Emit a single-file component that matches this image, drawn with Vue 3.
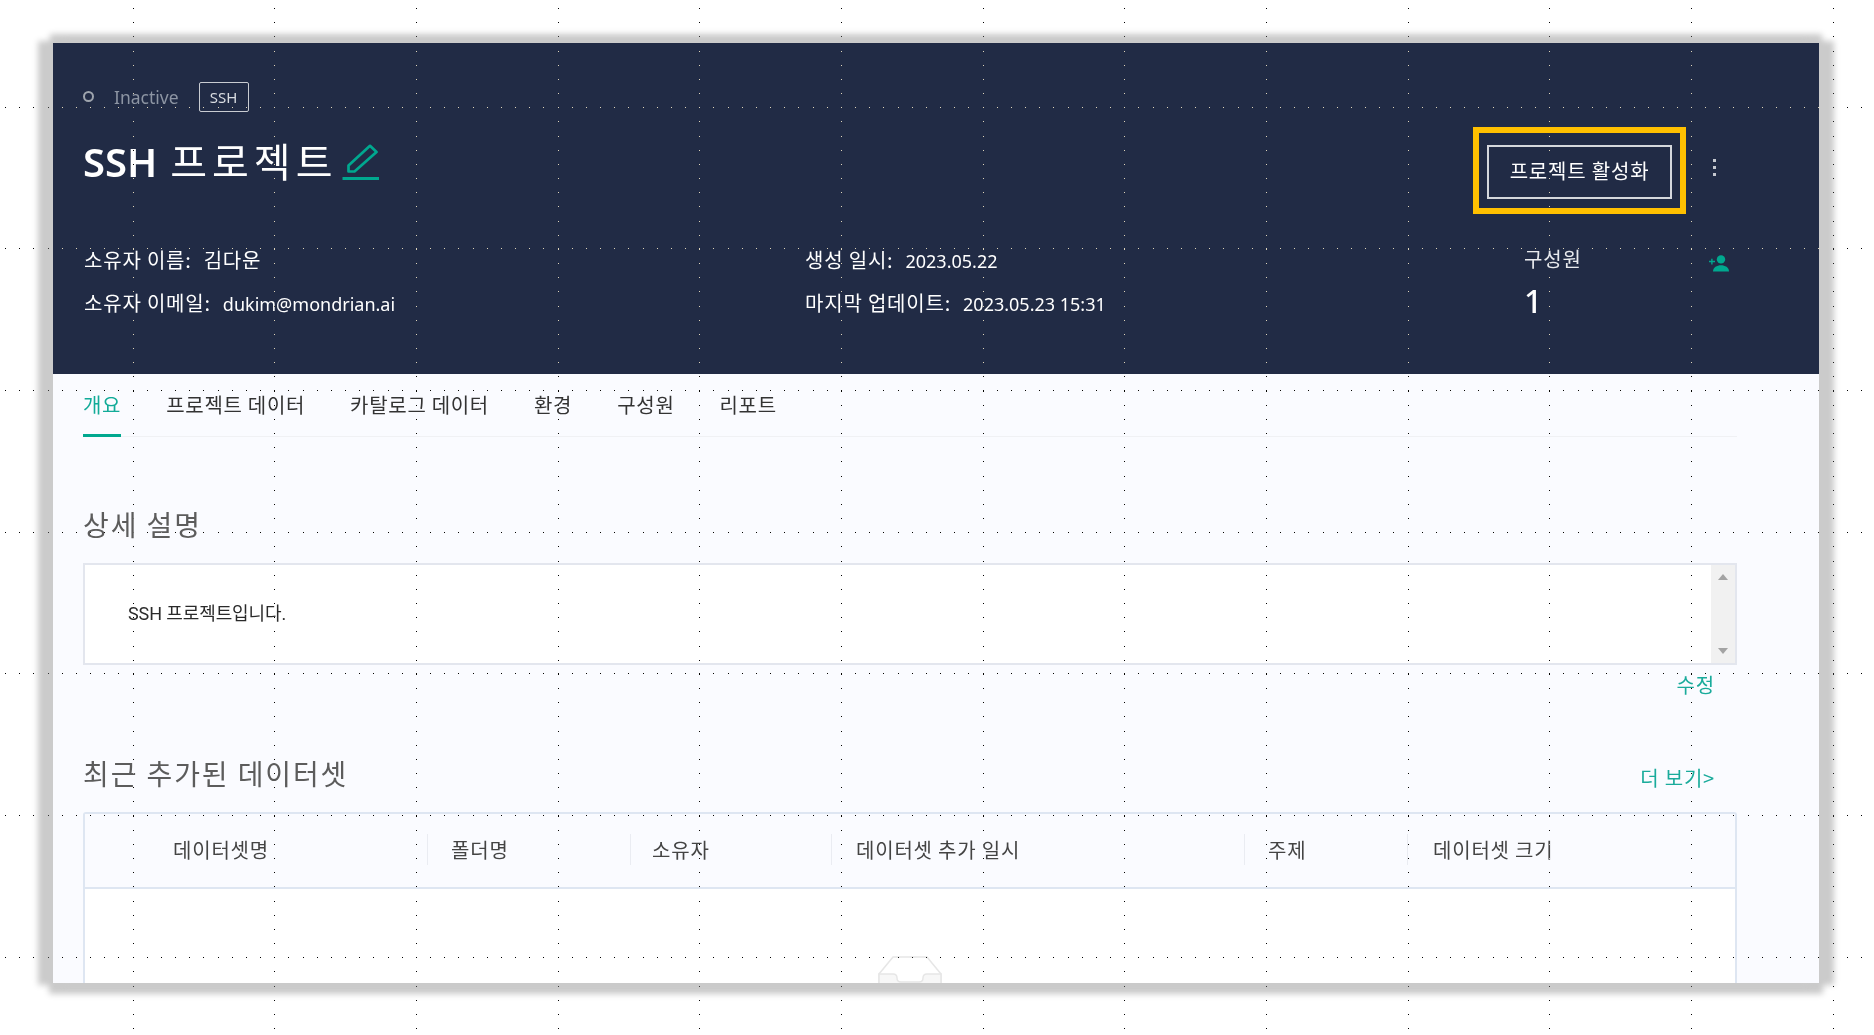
<script setup>
const tabs = ['개요', '프로젝트 데이터', '카탈로그 데이터', '환경', '구성원', '리포트']

const columns = [
  { label: '데이터셋명', width: 343, pad: 88 },
  { label: '폴더명', width: 203, pad: 23 },
  { label: '소유자', width: 201, pad: 21 },
  { label: '데이터셋 추가 일시', width: 413, pad: 24 },
  { label: '주제', width: 163, pad: 23 },
  { label: '데이터셋 크기', width: 143, pad: 25, clip: true }
]

// dotted guide lines that lie over the whole picture
const step = 141.67
const rows = Array.from({ length: 7 }, (_, i) => Math.floor(107 + i * step) + 0.5)
const cols = Array.from({ length: 13 }, (_, i) => Math.floor(133 + i * step) + 0.5)
</script>

<template>
  <div class="page">
    <div class="frame">
      <header class="hero">
        <div class="hero-main">
          <div class="status-row">
            <span class="status-dot"></span>
            <span class="status-text">Inactive</span>
            <span class="badge">SSH</span>
          </div>
          <div class="title-row">
            <h1><span class="title-latin">SSH</span> <span class="title-ko">프로젝트</span></h1>
            <svg class="pencil" viewBox="0 0 38 38" width="38" height="38" fill="none">
              <path d="M6.500 27.500V21.500L28 1.800 34.500 8 12.500 27.500Z" stroke="#00a88f" stroke-width="2.7" stroke-linejoin="round" />
              <path d="M0.500 34.500H37" stroke="#00a88f" stroke-width="3" />
            </svg>
          </div>
        </div>

        <div class="hero-action">
          <div class="highlight">
            <button type="button" class="activate">프로젝트 활성화</button>
          </div>
          <div class="more"><i></i><i></i><i></i></div>
        </div>

        <div class="meta">
          <div class="meta-col first">
            <p><span class="key">소유자 이름:</span><span class="key val">김다운</span></p>
            <p><span class="key">소유자 이메일:</span><span class="val">dukim@mondrian.ai</span></p>
          </div>
          <div class="meta-col second">
            <p><span class="key">생성 일시:</span><span class="val">2023.05.22</span></p>
            <p><span class="key">마지막 업데이트:</span><span class="val">2023.05.23 15:31</span></p>
          </div>
          <div class="members">
            <div class="members-text">
              <span class="members-label">구성원</span>
              <span class="members-count">1</span>
            </div>
            <svg class="add-user" viewBox="0 0 22 17" width="22" height="17" fill="#00a88f">
              <circle cx="13" cy="4.400" r="4.200" />
              <path d="M5 16.500c0-4 3.900-6.200 8-6.200s8 2.200 8 6.200Z" />
              <path d="M1 5.800h2.200V3.800h1.400v2H7v1.400H4.600v2.200H3.200V7.200H1Z" />
            </svg>
          </div>
        </div>
      </header>

      <main class="content">
        <nav class="tabs">
          <a v-for="(tab, i) in tabs" :key="tab" class="tab" :class="{ active: i === 0 }">{{ tab }}</a>
        </nav>

        <h2 class="section-title first-title">상세 설명</h2>
        <div class="desc-box">
          <p>SSH 프로젝트입니다.</p>
          <div class="scrollbar">
            <span class="arrow up"></span>
            <span class="arrow down"></span>
          </div>
        </div>
        <div class="edit-row"><a>수정</a></div>

        <div class="section-head">
          <h2 class="section-title">최근 추가된 데이터셋</h2>
          <a class="more-link">더 보기&gt;</a>
        </div>

        <div class="table">
          <div class="thead">
            <div
              v-for="col in columns"
              :key="col.label"
              class="th"
              :class="{ clip: col.clip }"
              :style="{ width: col.width + 'px', paddingLeft: col.pad + 'px' }"
            >{{ col.label }}</div>
          </div>
          <div class="tbody">
            <svg class="empty" viewBox="0 0 64 41" width="64" height="41" fill="#f7f7f7" stroke="#e6e6e6" stroke-width="1.5">
              <path d="M1 18 15 1H49L63 18V40H1Z" fill="#fff" />
              <path d="M1 18H15C18 18 19 19.500 19 22C19 25 21 26 23 26H41C43 26 45 25 45 22C45 19.500 46 18 49 18H63V40H1Z" />
            </svg>
          </div>
        </div>
      </main>
    </div>

    <svg class="guides" width="1874" height="1035">
      <line v-for="y in rows" :key="'r' + y" x1="5" :y1="y" x2="1874" :y2="y" />
      <line v-for="x in cols" :key="'c' + x" :x1="x" y1="8" :x2="x" y2="1035" />
    </svg>
  </div>
</template>

<style>
html,
body {
  margin: 0;
  background: #fff;
}
</style>

<style scoped>
.page {
  position: relative;
  width: 1874px;
  height: 1035px;
  padding: 43px 55px 52px 53px;
  box-sizing: border-box;
  overflow: hidden;
  background: #fff;
  font-family: "Noto Sans CJK KR", "Noto Sans", sans-serif;
}

.frame {
  width: 1766px;
  height: 940px;
  overflow: hidden;
  background: #fafbff;
  box-shadow: -13px 0 6px 2px #cbcbcb, 13px 0 6px 2px #cbcbcb, 0 -6px 6px 3px #cbcbcb, 0 7px 6px 4px #cbcbcb;
}

.guides {
  position: absolute;
  inset: 0;
  pointer-events: none;
  mix-blend-mode: difference;
  shape-rendering: crispEdges;
}

.guides line {
  stroke: #fff;
  stroke-width: 1;
  stroke-dasharray: 1 13.167;
}

.hero {
  position: relative;
  height: 331px;
  box-sizing: border-box;
  padding: 39px 30px 0;
  background: #212b45;
  color: #fff;
}

.status-row {
  display: flex;
  align-items: center;
  height: 29px;
}

.status-dot {
  width: 7px;
  height: 7px;
  border: 2px solid #9ea4ad;
  border-radius: 50%;
  margin-right: 19px;
}

.status-text {
  margin-left: 1px;
  font-family: "Noto Sans", sans-serif;
  font-size: 17.5px;
  color: #8d95a3;
  margin-right: 20px;
}

.badge {
  box-sizing: border-box;
  width: 50px;
  height: 30px;
  border: 1px solid #c9ccd2;
  border-radius: 2px;
  text-align: center;
  font-family: "Noto Sans", sans-serif;
  font-size: 15px;
  line-height: 28px;
  color: #d8dbe0;
}

.title-row {
  display: flex;
  align-items: center;
  gap: 5px;
  margin-top: 27px;
  height: 46px;
}

.title-row h1 {
  display: flex;
  align-items: baseline;
  gap: 13px;
  margin: 0;
  line-height: 46px;
  color: #fff;
}

.title-latin {
  font-family: "Noto Sans", sans-serif;
  font-size: 40px;
  font-weight: 600;
}

.title-ko {
  font-size: 40px;
  font-weight: 400;
  letter-spacing: 5px;
}

.pencil {
  margin-top: 4px;
}

.hero-action {
  position: absolute;
  top: 84px;
  right: 103px;
  display: flex;
  align-items: flex-start;
}

.highlight {
  box-sizing: border-box;
  width: 213px;
  height: 87px;
  padding: 12px 8px 9px;
  border: 6px solid #ffc000;
}

.activate {
  display: block;
  width: 185px;
  height: 54px;
  padding: 0 0 3px;
  box-sizing: border-box;
  border: 2px solid #d5d7dc;
  background: transparent;
  color: #fff;
  font-family: inherit;
  font-size: 20px;
  letter-spacing: 0.8px;
}

.more {
  display: flex;
  flex-direction: column;
  gap: 4px;
  margin: 32px 0 0 27px;
}

.more i {
  display: block;
  width: 3px;
  height: 3px;
  background: #c5c8cf;
}

.meta {
  position: absolute;
  left: 31px;
  right: 0;
  top: 203px;
  display: flex;
}

.meta-col p {
  margin: 0 0 16px;
  font-size: 18px;
  line-height: 27px;
  height: 27px;
  color: #fff;
}

.key {
  font-size: 20px;
  letter-spacing: 0.8px;
}

.val {
  margin-left: 12px;
  font-family: "Noto Sans", "Noto Sans CJK KR", sans-serif;
}

.key.val {
  font-family: "Noto Sans CJK KR", sans-serif;
}

.meta-col.first {
  width: 721px;
}

.meta-col.second {
  width: 719px;
}

.members {
  display: flex;
  width: 206px;
  justify-content: space-between;
}

.members-text {
  display: flex;
  flex-direction: column;
}

.members-label {
  font-size: 20px;
  letter-spacing: 0.8px;
  line-height: 25px;
  color: #e8eaee;
}

.members-count {
  margin-top: 13px;
  font-family: "Noto Sans", sans-serif;
  font-size: 32px;
  font-weight: 500;
  line-height: 34px;
}

.add-user {
  margin-top: 9px;
}

.content {
  padding: 0 82px 0 30px;
}

.tabs {
  display: flex;
  gap: 45px;
  height: 63px;
  box-sizing: border-box;
  border-bottom: 1px solid #f0f1f4;
}

.tab {
  height: 63px;
  box-sizing: border-box;
  padding-top: 18px;
  font-size: 20px;
  letter-spacing: 0.7px;
  line-height: 26px;
  color: #333;
}

.tab.active {
  color: #12ab98;
  border-bottom: 3px solid #00a88f;
}

.section-title {
  margin: 0;
  font-size: 28px;
  font-weight: 400;
  letter-spacing: 1.9px;
  line-height: 38px;
  color: #5c5c5c;
}

.first-title {
  margin-top: 68px;
}

.desc-box {
  display: flex;
  justify-content: space-between;
  box-sizing: border-box;
  height: 102px;
  margin-top: 20px;
  border: 2px solid #e3e6ee;
  background: #fff;
}

.desc-box p {
  margin: 36px 0 0 43px;
  font-family: Roboto, "Noto Sans CJK KR", sans-serif;
  font-size: 18px;
  line-height: 26px;
  letter-spacing: -0.1px;
  color: #2a2a2a;
}

.scrollbar {
  display: flex;
  flex-direction: column;
  align-items: center;
  justify-content: space-between;
  width: 24px;
  padding: 9px 0;
  box-sizing: border-box;
  background: #f1f1f1;
}

.arrow {
  width: 0;
  height: 0;
  border-left: 5px solid transparent;
  border-right: 5px solid transparent;
}

.arrow.up {
  border-bottom: 6px solid #a3a3a3;
}

.arrow.down {
  border-top: 6px solid #a3a3a3;
}

.edit-row {
  display: flex;
  justify-content: flex-end;
  padding-right: 22px;
  margin-top: 7px;
  font-size: 20px;
  letter-spacing: 0.8px;
  line-height: 26px;
  color: #1aab9b;
}

.section-head {
  display: flex;
  justify-content: space-between;
  align-items: flex-end;
  margin-top: 56px;
}

.more-link {
  margin: 0 22px 1px 0;
  font-size: 20px;
  letter-spacing: 0.8px;
  line-height: 26px;
  color: #1aab9b;
}

.table {
  box-sizing: border-box;
  height: 180px;
  margin-top: 20px;
  border: 2px solid #dee6f2;
  border-bottom: 0;
  border-radius: 3px 3px 0 0;
  background: #fff;
}

.thead {
  display: flex;
  align-items: center;
  height: 75px;
  box-sizing: border-box;
  padding-bottom: 3px;
  border-bottom: 2px solid #dee6f2;
  background: #fafbff;
}

.th {
  position: relative;
  box-sizing: border-box;
  white-space: nowrap;
  font-size: 20px;
  letter-spacing: 0.8px;
  line-height: 31px;
  color: #444;
}

.th:nth-child(-n + 5)::after {
  content: "";
  position: absolute;
  right: 0;
  top: 0;
  height: 31px;
  width: 1px;
  background: #eaecf2;
}

.th.clip {
  overflow: hidden;
}

.tbody {
  display: flex;
  justify-content: center;
  padding-top: 67px;
}

.empty {
  flex: none;
}
</style>
